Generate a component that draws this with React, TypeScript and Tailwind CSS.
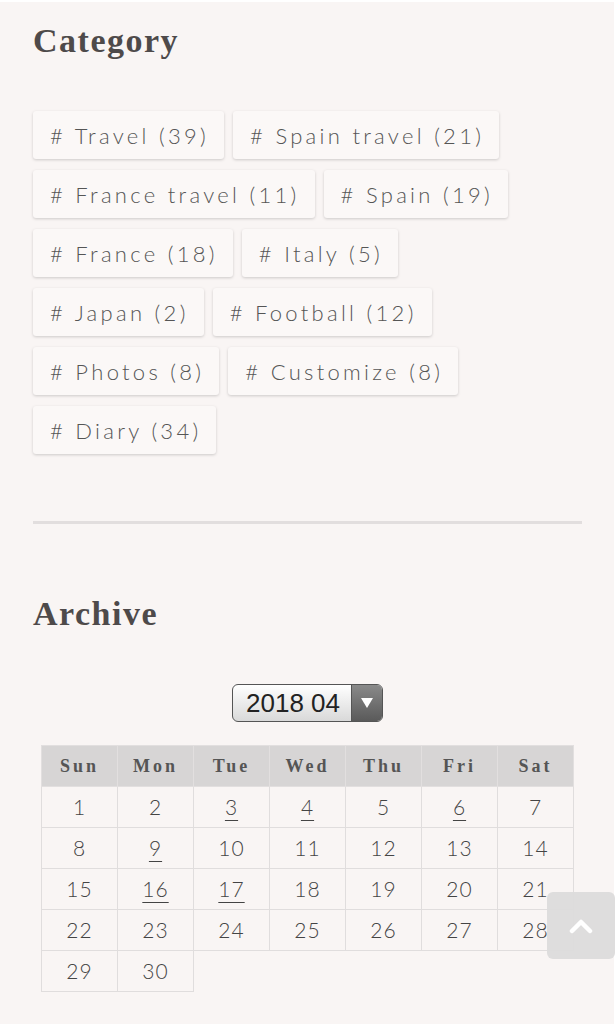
import React from "react";

const tagRows = [
  ["Travel (39)", "Spain travel (21)"],
  ["France travel (11)", "Spain (19)"],
  ["France (18)", "Italy (5)"],
  ["Japan (2)", "Football (12)"],
  ["Photos (8)", "Customize (8)"],
  ["Diary (34)"],
];

const days = ["Sun", "Mon", "Tue", "Wed", "Thu", "Fri", "Sat"];
const linked = [3, 4, 6, 9, 16, 17];

const weeks: number[][] = [
  [1, 2, 3, 4, 5, 6, 7],
  [8, 9, 10, 11, 12, 13, 14],
  [15, 16, 17, 18, 19, 20, 21],
  [22, 23, 24, 25, 26, 27, 28],
  [29, 30],
];

const serif = "font-['Liberation_Serif','Times_New_Roman',serif]";
const sans = "font-['Lato','Noto_Sans',sans-serif]";

function Heading({ children }: { children: React.ReactNode }) {
  return (
    <h2 className={`${serif} text-[34px] leading-[34px] font-bold tracking-[1.5px] text-[#4e4a4a]`}>
      {children}
    </h2>
  );
}

export default function App() {
  return (
    <div className="relative w-[616px] min-h-[1024px] bg-white pt-[2px] pr-[2px]">
      <div className="min-h-[1022px] bg-[#f9f5f4] pl-[33px] pr-[32px] pt-[22px] pb-[40px]">
        <Heading>Category</Heading>

        <div className="mt-[53px] flex flex-col gap-y-[11px]">
          {tagRows.map((row, i) => (
            <div key={i} className="flex gap-x-[9px]">
              {row.map((t) => (
                <a
                  key={t}
                  className={`${sans} flex h-[48px] items-center rounded-[3px] bg-[#fbf8f7] pl-[17px] pr-[15px] text-[22px] font-light tracking-[3.3px] text-[#555] shadow-[0_1px_3px_rgba(0,0,0,0.18)]`}
                >
                  # {t}
                </a>
              ))}
            </div>
          ))}
        </div>

        <div className="mt-[67px] h-[3px] w-full bg-[#e2dede]" />

        <div className="mt-[73px]">
          <Heading>Archive</Heading>
        </div>

        <div className="mt-[53px] flex justify-center">
          <div className="flex h-[38px] w-[151px] overflow-hidden rounded-[6px] border border-[#555] bg-gradient-to-b from-white to-[#d9d9d9]">
            <span className="flex flex-1 items-center justify-center pl-[2px] font-['Liberation_Sans',Arial,sans-serif] text-[26px] text-[#222]">
              2018 04
            </span>
            <span className="flex w-[31px] items-center justify-center border-l border-[#555] bg-gradient-to-b from-[#8a8a8a] to-[#5a5a5a]">
              <svg width="12" height="10" viewBox="0 0 12 10">
                <polygon points="0,0 12,0 6,10" fill="white" />
              </svg>
            </span>
          </div>
        </div>

        <table className="mx-[8px] mt-[23px] w-[533px] table-fixed border-collapse">
          <thead>
            <tr className="h-[41px] bg-[#d7d5d5]">
              {days.map((d) => (
                <th
                  key={d}
                  className={`${serif} border border-[#e2dfdf] text-[18px] font-bold tracking-[3px] text-[#555]`}
                >
                  {d}
                </th>
              ))}
            </tr>
          </thead>
          <tbody>
            {weeks.map((w, i) => (
              <tr key={i} className="h-[41px]">
                {w.map((n) => (
                  <td
                    key={n}
                    className={`${sans} border border-[#e0dddd] text-center text-[21px] font-light tracking-[1px] text-[#444]`}
                  >
                    {linked.includes(n) ? (
                      <span className="underline decoration-1 underline-offset-[5px]">{n}</span>
                    ) : (
                      n
                    )}
                  </td>
                ))}
              </tr>
            ))}
          </tbody>
        </table>
      </div>

      <button className="absolute left-[547px] top-[892px] flex h-[67px] w-[68px] items-center justify-center rounded-[6px] bg-[#dcdbdb]/95">
        <svg width="24" height="16" viewBox="0 0 24 16">
          <polyline
            points="3,13 12,4 21,13"
            fill="none"
            stroke="white"
            strokeWidth="4.5"
            strokeLinecap="round"
            strokeLinejoin="round"
          />
        </svg>
      </button>
    </div>
  );
}
